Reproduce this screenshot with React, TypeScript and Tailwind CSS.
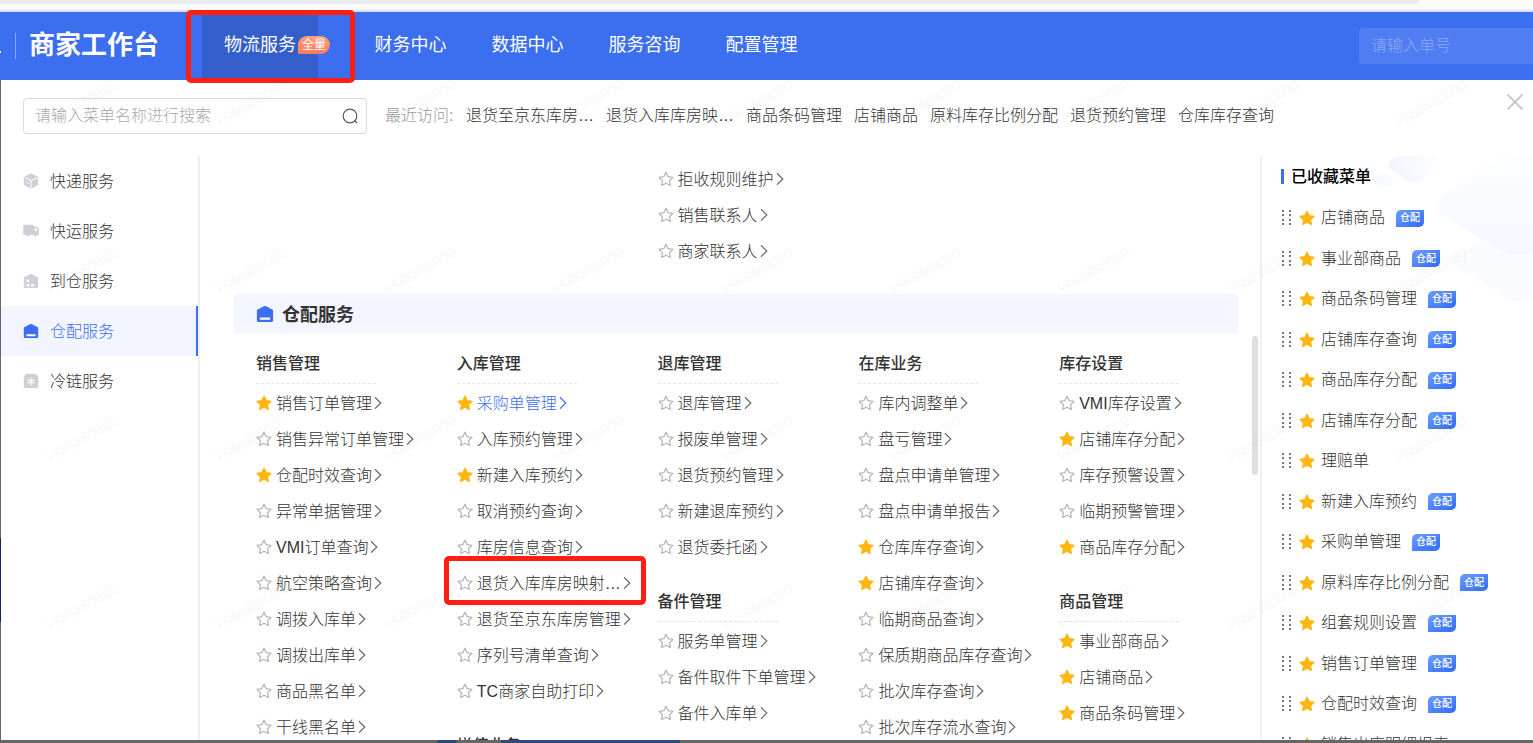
type MenuItem = { name: string; starred?: boolean; current?: boolean; marked?: boolean };
type MenuGroup = { title: string; items: MenuItem[] };

const navItems = ["财务中心", "数据中心", "服务咨询", "配置管理"];

const recentItems = [
  "退货至京东库房…",
  "退货入库库房映…",
  "商品条码管理",
  "店铺商品",
  "原料库存比例分配",
  "退货预约管理",
  "仓库库存查询",
];

const contactItems: MenuItem[] = [{ name: "拒收规则维护" }, { name: "销售联系人" }, { name: "商家联系人" }];

const columns: MenuGroup[][] = [
  [
    {
      title: "销售管理",
      items: [
        { name: "销售订单管理", starred: true },
        { name: "销售异常订单管理" },
        { name: "仓配时效查询", starred: true },
        { name: "异常单据管理" },
        { name: "VMI订单查询" },
        { name: "航空策略查询" },
        { name: "调拨入库单" },
        { name: "调拨出库单" },
        { name: "商品黑名单" },
        { name: "干线黑名单" },
      ],
    },
  ],
  [
    {
      title: "入库管理",
      items: [
        { name: "采购单管理", starred: true, current: true },
        { name: "入库预约管理" },
        { name: "新建入库预约", starred: true },
        { name: "取消预约查询" },
        { name: "库房信息查询" },
        { name: "退货入库库房映射…", marked: true },
        { name: "退货至京东库房管理" },
        { name: "序列号清单查询" },
        { name: "TC商家自助打印" },
      ],
    },
    { title: "增值业务", items: [] },
  ],
  [
    {
      title: "退库管理",
      items: [
        { name: "退库管理" },
        { name: "报废单管理" },
        { name: "退货预约管理" },
        { name: "新建退库预约" },
        { name: "退货委托函" },
      ],
    },
    {
      title: "备件管理",
      items: [{ name: "服务单管理" }, { name: "备件取件下单管理" }, { name: "备件入库单" }],
    },
  ],
  [
    {
      title: "在库业务",
      items: [
        { name: "库内调整单" },
        { name: "盘亏管理" },
        { name: "盘点申请单管理" },
        { name: "盘点申请单报告" },
        { name: "仓库库存查询", starred: true },
        { name: "店铺库存查询", starred: true },
        { name: "临期商品查询" },
        { name: "保质期商品库存查询" },
        { name: "批次库存查询" },
        { name: "批次库存流水查询" },
      ],
    },
  ],
  [
    {
      title: "库存设置",
      items: [
        { name: "VMI库存设置" },
        { name: "店铺库存分配", starred: true },
        { name: "库存预警设置" },
        { name: "临期预警管理" },
        { name: "商品库存分配", starred: true },
      ],
    },
    {
      title: "商品管理",
      items: [
        { name: "事业部商品", starred: true },
        { name: "店铺商品", starred: true },
        { name: "商品条码管理", starred: true },
      ],
    },
  ],
];

const favorites = [
  { name: "店铺商品", tag: "仓配" },
  { name: "事业部商品", tag: "仓配" },
  { name: "商品条码管理", tag: "仓配" },
  { name: "店铺库存查询", tag: "仓配" },
  { name: "商品库存分配", tag: "仓配" },
  { name: "店铺库存分配", tag: "仓配" },
  { name: "理赔单" },
  { name: "新建入库预约", tag: "仓配" },
  { name: "采购单管理", tag: "仓配" },
  { name: "原料库存比例分配", tag: "仓配" },
  { name: "组套规则设置", tag: "仓配" },
  { name: "销售订单管理", tag: "仓配" },
  { name: "仓配时效查询", tag: "仓配" },
  { name: "销售出库明细报表" },
];

function StarIcon({ filled }: { filled?: boolean }) {
  return (
    <svg className="w-4 h-4 shrink-0" viewBox="0 0 16 16">
      <path
        d="M8 1.2l2.1 4.4 4.9.7-3.5 3.4.8 4.8L8 12.2l-4.3 2.3.8-4.8L1 6.3l4.9-.7z"
        fill={filled ? "#ffb612" : "none"}
        stroke={filled ? "#ffb612" : "#b8b8b8"}
        strokeWidth="1.3"
        strokeLinejoin="round"
      />
    </svg>
  );
}

function WarehouseIcon({ className }: { className: string }) {
  return (
    <svg className={className} viewBox="0 0 16 16">
      <path
        d="M1.6 3.9 7 1.2q1-.5 2 0l5.400 2.700q.8.400.8 1.300v8.600q0 1.200-1.200 1.200H2q-1.200 0-1.200-1.200V5.200q0-.9.8-1.300z"
        fill="#3c6ef0"
      />
      <rect x="3.400" y="11.200" width="9.200" height="2" rx=".4" fill="#fff" />
    </svg>
  );
}

function BoxIcon() {
  return (
    <svg className="w-4 h-4" viewBox="0 0 16 16">
      <path d="M8 .3l7.200 3.600v8.200L8 15.800.8 12.100V3.900z" fill="#cfcfd8" />
      <path d="M1.300 4.600L8 7.700l6.700-3.100M8 7.700v7.600M3 9.200l2.400 1.100" fill="none" stroke="#fff" strokeWidth="1" />
    </svg>
  );
}

function TruckIcon() {
  return (
    <svg className="w-4 h-4" viewBox="0 0 16 16">
      <path
        d="M1.500 1.800h8q1.200 0 1.200 1.200v.4h2.500q1 0 1.500.9l1 1.900q.3.500.3 1v3.700q0 1.100-1.200 1.100h-.5a1.800 1.800 0 01-3.500 0H6.500a1.800 1.800 0 01-3.500 0H1.500Q.2 12 .2 10.800V3q0-1.200 1.300-1.200z"
        fill="#cfcfd8"
      />
      <path d="M11.700 5h1.500l1 2.300v.6h-2.500z" fill="#fff" />
    </svg>
  );
}

function DepotIcon() {
  return (
    <svg className="w-4 h-4" viewBox="0 0 16 16">
      <path
        d="M1.600 3.900 7 1.200q1-.5 2 0l5.400 2.700q.8.400.8 1.300v8.600q0 1.200-1.200 1.200H2q-1.200 0-1.200-1.200V5.200q0-.9.800-1.300z"
        fill="#cfcfd8"
      />
      <path d="M3.500 6.500h2.800v2.400H3.500zM3.500 11h2.800v2.400H3.500zM8 11h2.800v2.400H8z" fill="#fff" />
    </svg>
  );
}

function ColdIcon() {
  return (
    <svg className="w-4 h-4" viewBox="0 0 16 16">
      <path d="M3 .8h10l2.200 2.700v10.300q0 1.200-1.200 1.200H2q-1.200 0-1.200-1.200V3.500z" fill="#cfcfd8" />
      <path d="M8 4.500v8M4.500 6.500l7 4M11.500 6.500l-7 4" stroke="#fff" strokeWidth="1.200" />
    </svg>
  );
}

function MenuLink({ item }: { item: MenuItem }) {
  return (
    <li className="relative flex items-center h-9">
      <StarIcon filled={item.starred} />
      <a
        href="#"
        className={`ml-1 flex items-center whitespace-nowrap ${item.current ? "text-[#3c6ef0]" : "text-[#333]"}`}
      >
        <span className="pt-[2px]">{item.name}</span>
        <svg
          className={`w-2 h-3 ml-[2px] ${item.current ? "text-[#3c6ef0]" : "text-[#666]"}`}
          viewBox="0 0 8 12"
          fill="none"
          stroke="currentColor"
          strokeWidth="1.200"
        >
          <path d="M1 .3l5.800 5.700L1 11.700" />
        </svg>
      </a>
      {item.marked && (
        <span className="absolute -left-[13px] -top-[9px] w-[202px] h-[49px] border-[5px] border-[#ff1e12] rounded-[5px] pointer-events-none z-10" />
      )}
    </li>
  );
}

function Watermark() {
  return (
    <div className="absolute inset-0 overflow-hidden pointer-events-none" aria-hidden="true">
      <div className="-mt-[61px] -ml-[3px] w-[1686px] grid grid-cols-10 auto-rows-[168px] font-['Noto_Sans',sans-serif] font-normal text-sm text-black/5">
        {Array.from({ length: 40 }, (_, i) => (
          <span key={i} className="flex items-center justify-center">
            <span className="-rotate-30">YS88880000</span>
          </span>
        ))}
      </div>
    </div>
  );
}

export default function App() {
  const services = [
    { name: "快递服务", icon: <BoxIcon /> },
    { name: "快运服务", icon: <TruckIcon /> },
    { name: "到仓服务", icon: <DepotIcon /> },
    { name: "仓配服务", icon: <WarehouseIcon className="w-4 h-4" />, active: true },
    { name: "冷链服务", icon: <ColdIcon /> },
  ];

  return (
    <div className="h-screen flex flex-col overflow-hidden bg-white text-base font-light text-[#333] font-['Liberation_Sans','Noto_Sans_CJK_SC',sans-serif]">
      {/* Browser edge */}
      <div className="h-3 shrink-0 bg-[#f9fafc] border-b-2 border-[#dadce0]">
        <div className="h-1 mr-[114px] bg-[#ebecee] rounded-br-lg" />
      </div>

      {/* Header */}
      <header className="h-[68px] shrink-0 flex items-center bg-[#3c6ef0] text-white">
        <span className="w-[15px] pt-3">
          <span className="block w-px h-[2px] bg-white" />
        </span>
        <span className="w-px h-[26px] bg-white/40" />
        <h1 className="ml-[13px] w-[173px] pb-[2px] text-[26px] leading-8 font-bold whitespace-nowrap">商家工作台</h1>
        <nav className="flex h-full text-lg font-normal">
          <a href="#" className="relative w-[116px] mr-[34px] pb-[2px] h-full flex items-center justify-center bg-[#345ecb]">
            物流服务
            <span className="absolute left-24 top-6 w-8 h-[18px] flex items-center justify-center rounded-[9px] rounded-bl-none bg-linear-to-b from-[#ffa183] to-[#fb7a56] text-xs">
              全量
            </span>
            <span className="absolute -left-4 -top-[2px] w-[169px] h-[73px] border-[5px] border-[#ff1e12] rounded-[5px] z-10" />
          </a>
          {navItems.map((name) => (
            <a key={name} href="#" className="w-[117px] h-full pb-[2px] flex items-center justify-center">
              {name}
            </a>
          ))}
        </nav>
        <input
          aria-label="请输入单号"
          placeholder="请输入单号"
          className="ml-auto w-[174px] h-9 px-3 rounded-l bg-white/10 placeholder:text-white/35"
        />
      </header>

      {/* Menu panel */}
      <div className="relative flex-1 min-h-0 flex flex-col border-l border-[#666]">
        <div className="h-[76px] shrink-0 flex items-center pl-[22px] pb-1">
          <div className="relative w-[344px]">
            <input
              aria-label="请输入菜单名称进行搜索"
              placeholder="请输入菜单名称进行搜索"
              className="block w-full h-9 pl-[11px] pr-10 rounded border border-[#d9d9d9] placeholder:text-[#aaa]"
            />
            <svg
              className="absolute right-[9px] top-[10px] w-4 h-4"
              viewBox="0 0 16 16"
              fill="none"
              stroke="#555"
              strokeWidth="1.200"
            >
              <circle cx="8" cy="8" r="6.800" />
              <path d="M12.500 12.500l2.500 2.500" />
            </svg>
          </div>
          <span className="ml-[18px] w-[81px] text-[#999]">最近访问:</span>
          <div className="flex gap-3 whitespace-nowrap">
            {recentItems.map((name) => (
              <a key={name} href="#">
                {name}
              </a>
            ))}
          </div>
          <button aria-label="关闭" className="ml-auto mr-[9px] mb-7">
            <svg className="w-[18px] h-[18px]" viewBox="0 0 18 18" stroke="#c8c8c8" strokeWidth="1.800">
              <path d="M1.500 1.500l15 15M16.500 1.500l-15 15" />
            </svg>
          </button>
        </div>

        <div className="flex-1 min-h-0 flex">
          {/* Services */}
          <aside className="w-[199px] shrink-0 border-r-2 border-[#f0f0f0]">
            {services.map((service) => (
              <a
                key={service.name}
                href="#"
                className={`h-[50px] pl-[22px] flex items-center gap-[11px] ${
                  service.active ? "bg-[#f2f5ff] text-[#3c6ef0] border-r-2 border-[#3c6ef0]" : ""
                }`}
              >
                {service.icon}
                <span className="pt-[2px]">{service.name}</span>
              </a>
            ))}
          </aside>

          {/* Menu columns */}
          <main className="relative flex-1 min-w-0 overflow-hidden pl-[34px] pr-[22px] pt-[5px]">
            <div className="ml-[22px] -mr-[22px] grid grid-cols-5">
              <ul className="col-start-3">
                {contactItems.map((item) => (
                  <MenuLink key={item.name} item={item} />
                ))}
              </ul>
            </div>
            <h2 className="mt-[25px] h-10 px-[22px] flex items-center gap-2 rounded bg-[#f3f6ff] text-lg font-bold">
              <WarehouseIcon className="w-[18px] h-[18px]" />
              <span className="pt-[2px]">仓配服务</span>
            </h2>
            <div className="mt-[9px] ml-[22px] -mr-[22px] grid grid-cols-5">
              {columns.map((groups, index) => (
                <div key={index} className="flex flex-col gap-4">
                  {groups.map((group) => (
                    <section key={group.title}>
                      <h3 className="w-[120px] h-[41px] mb-px pt-[2px] flex items-center border-b border-dashed border-[#e5e5e5] font-medium">
                        {group.title}
                      </h3>
                      <ul>
                        {group.items.map((item) => (
                          <MenuLink key={item.name} item={item} />
                        ))}
                      </ul>
                    </section>
                  ))}
                </div>
              ))}
            </div>
            <div className="absolute right-[2px] top-[180px] w-[6px] h-[139px] rounded-full bg-[#dfdfdf]" />
          </main>

          {/* Favorites */}
          <aside className="relative w-[273px] shrink-0 overflow-hidden border-l-2 border-[#f0f0f0] pl-[19px]">
            <svg className="absolute right-0 top-0 w-[164px] h-[146px]" viewBox="0 0 164 146">
              <defs>
                <linearGradient id="tile" x1="0" y1="0.300" x2="1" y2="0">
                  <stop offset="0" stopColor="#f1f5ff" />
                  <stop offset="1" stopColor="#fdfeff" />
                </linearGradient>
                <linearGradient id="tile-large" x1="0" y1="0" x2="0" y2="1">
                  <stop offset="0" stopColor="#fdfeff" />
                  <stop offset="1" stopColor="#f3f7ff" />
                </linearGradient>
              </defs>
              <path d="M22 4q4-4 10-4h34q8 5 0 10L52 25q-6 4-12 1L21 13q-5-4 1-9z" fill="url(#tile)" />
              <path d="M5 22l6-4q3-2 6 0l6 4q3 2 0 4l-6 4q-3 2-6 1l-6-5q-3-2 0-4z" fill="#f6f9ff" />
              <path d="M84 100l35-18 45 14v46q-14 6-28 0l-46-30q-10-7-6-12z" fill="#fafbff" />
              <path d="M71 42l50-36q8-6 18-6h25v96q-16 6-32-2L71 58q-8-8 0-16z" fill="url(#tile-large)" />
            </svg>
            <h2 className="relative h-10 flex items-center gap-[7px] font-medium text-black">
              <span className="w-[3px] h-[15px] bg-[#3c6ef0]" />
              <span className="pt-[2px]">已收藏菜单</span>
            </h2>
            <ul className="relative mt-[2px]">
              {favorites.map((item) => (
                <li key={item.name} className="h-10 even:h-[41px] flex items-center whitespace-nowrap">
                  <svg className="w-[11px] h-4 mr-[7px] shrink-0" viewBox="0 0 11 16" fill="#777">
                    {[0, 4, 9, 13].map((y) => (
                      <path key={y} d={`M1 ${y}h2v2h-2zM8 ${y}h2v2h-2z`} />
                    ))}
                  </svg>
                  <StarIcon filled />
                  <a href="#" className="ml-[6px]">
                    {item.name}
                  </a>
                  {item.tag && (
                    <span className="ml-[11px] w-7 h-[17px] flex items-center justify-center rounded-tl-[5px] rounded-br-[5px] bg-linear-to-br from-[#6d9cff] to-[#2f6bf7] text-white text-[10px] leading-4 font-medium">
                      {item.tag}
                    </span>
                  )}
                </li>
              ))}
            </ul>
          </aside>
        </div>
        <Watermark />
        <div className="absolute -left-px bottom-[118px] w-px h-[84px] bg-[#0d2560]" />
      </div>

      {/* Dimmed page under the panel */}
      <div className="h-[3px] shrink-0 bg-[#666] flex">
        <div className="ml-[437px] w-5 bg-[#2b4680] rounded-t-full" />
        <div className="ml-11 w-[179px] bg-[#34477c]" />
      </div>
    </div>
  );
}
